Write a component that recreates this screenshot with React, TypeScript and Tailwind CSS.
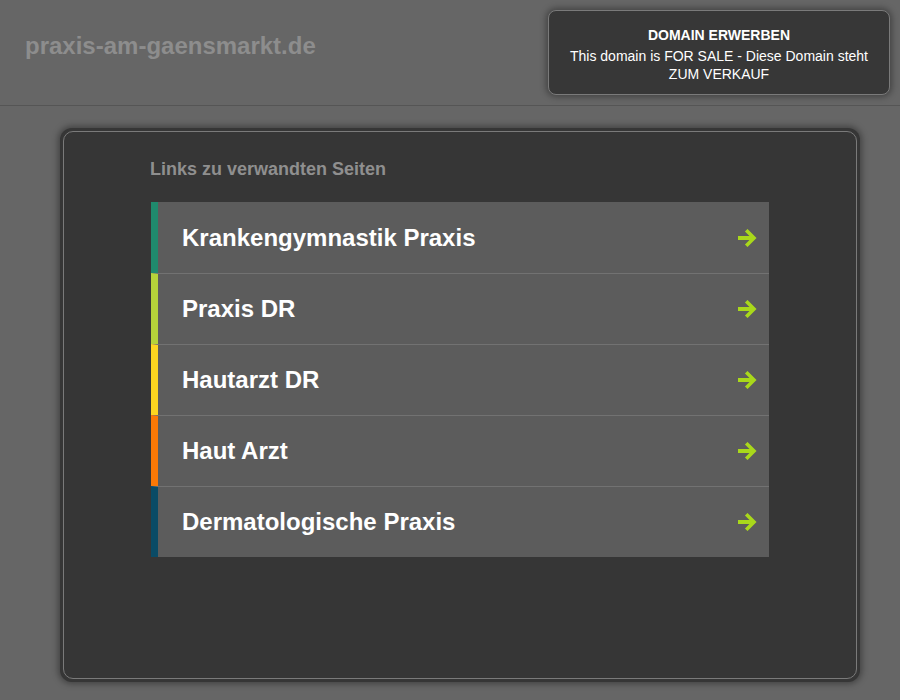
const LINKS = [
  { label: "Krankengymnastik Praxis", bar: "border-l-[#1f8a6d]" },
  { label: "Praxis DR", bar: "border-l-[#b5d33a]" },
  { label: "Hautarzt DR", bar: "border-l-[#fcd620]" },
  { label: "Haut Arzt", bar: "border-l-[#fb7906]" },
  { label: "Dermatologische Praxis", bar: "border-l-[#0a4b66]" },
];

function Arrow() {
  return (
    <svg width="21" height="18" viewBox="0 0 21 18" className="shrink-0">
      <path d="M1 7h14v4H1z" fill="#a9d81b" />
      <path d="M10.5 2.5 17 9l-6.5 6.5" fill="none" stroke="#a9d81b" strokeWidth="3.6" strokeLinecap="square" />
    </svg>
  );
}

export default function App() {
  return (
    <div className="min-h-[700px] bg-[#666666] font-['Liberation_Sans',Arial,sans-serif]">
      <header className="flex h-[106px] items-start justify-between border-b border-[#555555] pl-[25px] pr-[10px]">
        <h1 className="mt-[30px] text-[24px] font-bold leading-[32px] text-[#8d8d8d]">
          praxis-am-gaensmarkt.de
        </h1>
        <div className="mt-[10px] flex h-[85px] w-[342px] flex-col items-center justify-center rounded-[8px] border border-[#7a7a7a] bg-[#373737] px-3 pt-[3px] text-center text-[14px] leading-[18px] text-white shadow-[0_0_6px_2px_rgba(0,0,0,0.35)]">
          <div className="font-bold">DOMAIN ERWERBEN</div>
          <div className="mt-[3px]">This domain is FOR SALE - Diese Domain steht ZUM VERKAUF</div>
        </div>
      </header>

      <main className="pl-[60px] pt-[22px]">
        <div className="w-[800px] rounded-[12px] bg-[#363636] p-[3px] shadow-[0_0_6px_2px_rgba(0,0,0,0.35)]">
          <div className="flex h-[548px] flex-col items-center rounded-[10px] border border-[#7a7a7a]">
            <div className="w-[618px]">
              <h2 className="mt-[26px] -ml-px text-[18px] font-bold leading-[22px] text-[#8f8f8f]">
                Links zu verwandten Seiten
              </h2>
              <ul className="mt-[22px]">
                {LINKS.map((l, i) => (
                  <li
                    key={l.label}
                    className={`flex h-[71px] items-center justify-between border-l-[7px] bg-[#5c5c5c] pl-[24px] pr-[11px] ${l.bar} ${
                      i > 0 ? "border-t border-t-[#727272]" : ""
                    }`}
                  >
                    <span className="text-[24px] font-bold text-white">{l.label}</span>
                    <Arrow />
                  </li>
                ))}
              </ul>
            </div>
          </div>
        </div>
      </main>
    </div>
  );
}
